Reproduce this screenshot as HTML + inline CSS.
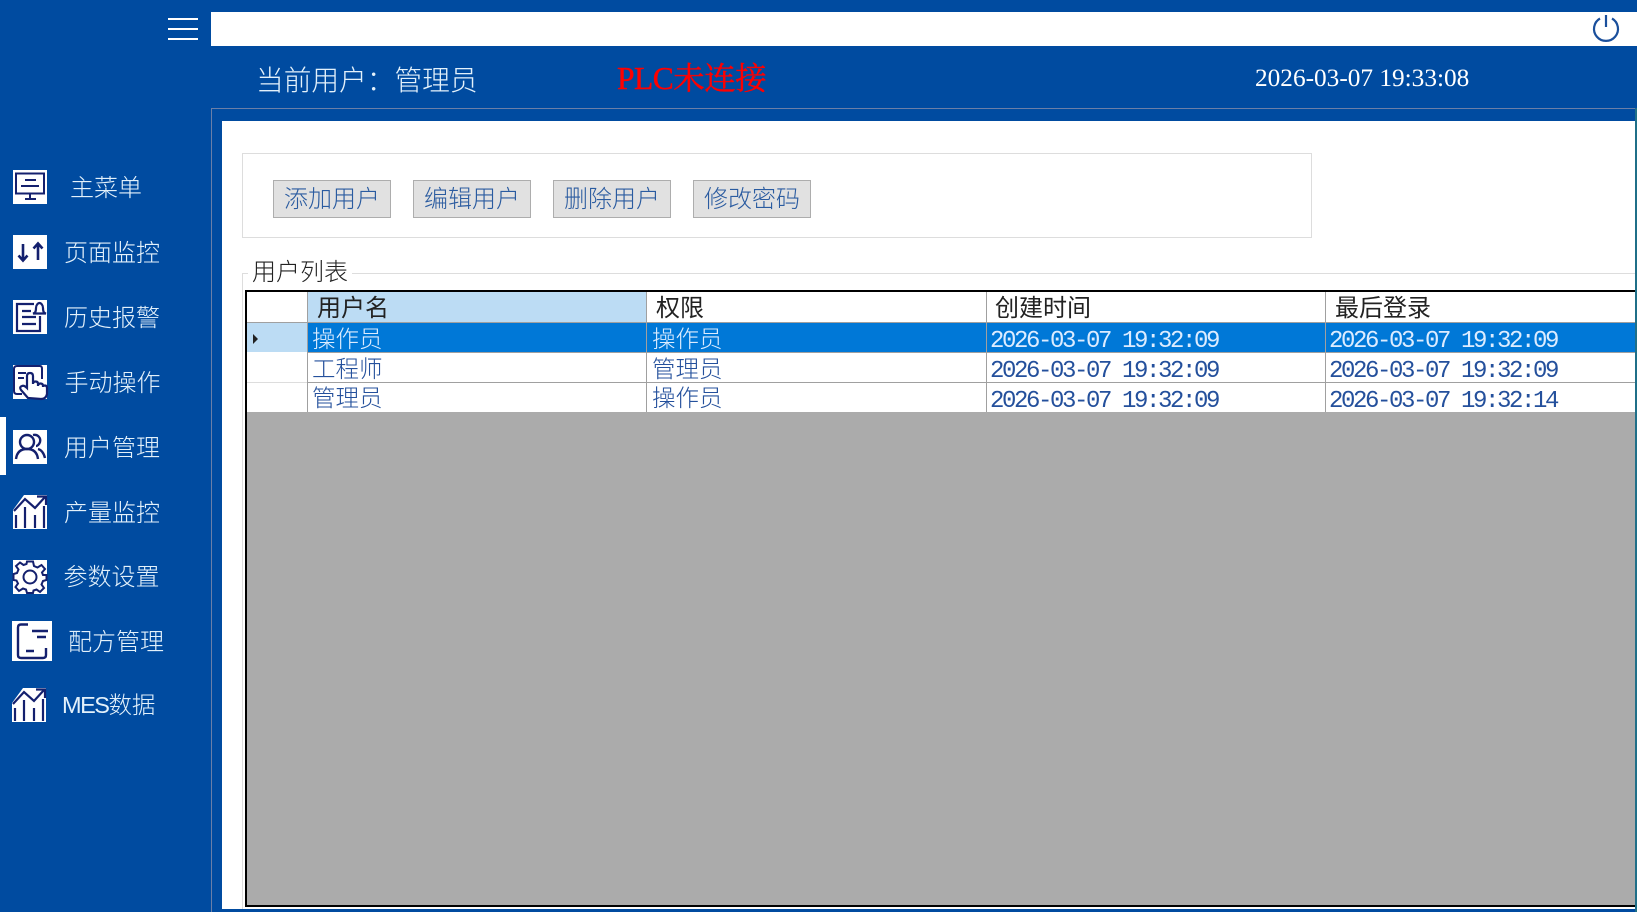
<!DOCTYPE html>
<html lang="zh"><head><meta charset="utf-8"><style>
html,body{margin:0;padding:0}
body{width:1637px;height:912px;background:#004ba0;overflow:hidden;position:relative;font-family:"Liberation Sans","Noto Sans CJK SC",sans-serif}
div,span,svg{position:absolute;display:block}
.t{white-space:nowrap;line-height:1}
.t span{position:static;display:inline}
.nav{color:#e3f1fb;font-size:24px;font-weight:300}
.ic{left:13px;width:34px;height:34px;background:#fff}
.ic *{position:static}
svg{overflow:visible}
svg *{position:static;display:inline}
svg path,svg rect,svg circle,svg polyline,svg line{fill:none;stroke:#14206e;stroke-width:2}
.btn{top:180px;width:116px;height:36px;background:#e1e1e1;border:1px solid #adadad;color:#2a5ba0;font-size:24px;line-height:38px;text-align:center;font-weight:300;letter-spacing:0}
.hd{top:297px;color:#222;font-size:24px}
.c{color:#24509c;font-size:23.5px;font-weight:300}
.d{color:#24509c;font-family:"Liberation Mono",monospace;font-size:24px;letter-spacing:-2.4px}
.w{color:#dcecff}
.ln{background:#a0a0a0}
</style></head><body>
<div style="left:211px;top:12px;width:1426px;height:34px;background:#fff"></div>
<div style="left:168px;top:18px;width:30px;height:2.4px;background:#fff"></div>
<div style="left:168px;top:28px;width:30px;height:2.4px;background:#fff"></div>
<div style="left:168px;top:38px;width:30px;height:2.4px;background:#fff"></div>
<svg style="left:1592px;top:13px" width="28" height="28" viewBox="0 0 28 28"><path d="M8 5.500A12 12 0 1 0 20 5.500M14 2V14" style="stroke:#1a4f9c;stroke-width:2.200"/></svg>
<div class="t" style="left:256px;top:67px;font-size:27.700px;color:#e3f1fb;font-weight:300">当前用户：管理员</div>
<div class="t" style="left:617px;top:63px;font-size:31.500px;color:#f00;font-family:'Liberation Serif','Noto Serif CJK SC',serif;letter-spacing:-.5px;-webkit-text-stroke:.4px #f00">PLC未连接</div>
<div class="t" style="left:1255px;top:66px;font-size:25.300px;color:#fff;font-family:'Liberation Serif',serif">2026-03-07 19:33:08</div>

<div style="left:211px;top:108px;width:1426px;height:1px;background:#6a7fa8"></div>
<div style="left:211px;top:108px;width:1px;height:804px;background:#6a7fa8"></div>
<div style="left:222px;top:121px;width:1413px;height:788px;background:#fff"></div>
<div style="left:1635px;top:108px;width:2px;height:804px;background:#1f6f88"></div>

<!-- sidebar -->
<div style="left:0;top:417px;width:6px;height:58px;background:#fff"></div>
<div class="ic" style="top:170px"><svg width="34" height="34" viewBox="0 0 34 34"><rect x="3" y="3.500" width="28" height="20"/><path d="M12 10H23M8 16H26M17 24V28M12 29H23"/></svg></div>
<div class="t nav" style="left:70px;top:176.500px">主菜单</div>
<div class="ic" style="top:235px"><svg width="34" height="34" viewBox="0 0 34 34"><path d="M10 9V25M5.500 20.500L10 25.500L14.500 20.500M25 25V9M20.500 13.500L25 8.500L29.500 13.500" style="stroke-width:2.600"/></svg></div>
<div class="t nav" style="left:64px;top:241.500px">页面监控</div>
<div class="ic" style="top:300px"><svg width="34" height="34" viewBox="0 0 34 34"><path d="M21 4H4V31H27V16M9 11H18M9 17H23M9 24H23" style="stroke-width:2.200"/><path d="M20 13.500C22 13 23 12 23 8C23 5 25 3 26.500 3C28 3 30 5 30 8C30 12 31 13 33 13.500Z" style="fill:#fff;stroke-width:2.200"/></svg></div>
<div class="t nav" style="left:64px;top:306.500px">历史报警</div>
<div class="ic" style="top:365px"><svg width="34" height="34" viewBox="0 0 34 34"><path d="M9 29H4Q1 29 1 26V4Q1 1 4 1H27Q29 1 29 4V14M5 8H13M5 13H11"/><path d="M15 33L8 25Q6 22 9 21Q11 20 14 23V11Q14 8 17 8Q20 8 20 11V19Q20 16.500 22.500 16.500Q25 16.500 25 19V21Q25 18.500 27.500 18.500Q30 18.500 30 21V22Q30 20.500 32 20.500Q34 20.500 34 23V29Q33 34 28 34Z" style="fill:#fff;stroke-width:2.200"/></svg></div>
<div class="t nav" style="left:64.500px;top:371.500px">手动操作</div>
<div class="ic" style="top:430px"><svg width="34" height="34" viewBox="0 0 34 34"><circle cx="14" cy="12" r="7" style="stroke-width:2.400"/><path d="M3 29C4 21 9 19 14 19C19 19 24 21 25 29M20 5C25 4 28 8 27 12C26 15 24 16 23 16M25 19C29 20 31 24 32 28" style="stroke-width:2.400"/></svg></div>
<div class="t nav" style="left:64px;top:436.500px">用户管理</div>
<div class="ic" style="top:495px"><svg width="34" height="34" viewBox="0 0 34 34"><path d="M0 0H11L0 15Z" style="fill:#004ba0;stroke:none"/><path d="M1 16L12 4L22 13L32 2M24 1.500H33V10M3 33V20M12 33V12M22 33V20M31 33V11" style="stroke-width:2.200"/></svg></div>
<div class="t nav" style="left:64px;top:501.500px">产量监控</div>
<div class="ic" style="top:560px"><svg width="34" height="34" viewBox="0 0 34 34"><circle cx="17" cy="17" r="6.500"/><path d="M14 1.500H20L21 6L24.500 7.500L28.500 5L32 9L29 12.500L30 15L33.500 15V20L30 21L28.500 24.500L31 28L27 32L23.500 29.500L20.500 30.500L20 33H14L13 29.500L10 28.500L6 31L2.500 27L5 23.500L3.500 20.500L.5 20V14L4 13L5.500 9.500L3 6L7 2.500L10.500 5L13.500 4Z"/></svg></div>
<div class="t nav" style="left:63.500px;top:566px">参数设置</div>
<div class="ic" style="left:12px;top:621px;width:40px;height:40px"><svg width="40" height="40" viewBox="0 0 40 40"><path d="M16 3.500H9Q6 3.500 6 6.500V34Q6 37 9 37H31Q34 37 34 34V27M20 10H36M25 16H34M14 30H22" style="stroke-width:2.400"/></svg></div>
<div class="t nav" style="left:68px;top:630.500px">配方管理</div>
<div class="ic" style="left:12px;top:688px"><svg width="34" height="34" viewBox="0 0 34 34"><path d="M0 0H11L0 15Z" style="fill:#004ba0;stroke:none"/><path d="M1 16L12 4L22 13L32 2M24 1.500H33V10M3 33V20M12 33V12M22 33V20M31 33V11" style="stroke-width:2.200"/></svg></div>
<div class="t nav" style="left:62px;top:693.500px;font-size:23.500px"><span style="letter-spacing:-1.500px">MES</span>数据</div>

<!-- toolbar -->
<div style="left:242px;top:153px;width:1068px;height:83px;border:1px solid #ddd"></div>
<div class="btn" style="left:273px">添加用户</div>
<div class="btn" style="left:413px">编辑用户</div>
<div class="btn" style="left:553px">删除用户</div>
<div class="btn" style="left:693px">修改密码</div>

<!-- group -->
<div style="left:242px;top:273px;width:1393px;height:1px;background:#ddd"></div>
<div style="left:242px;top:273px;width:1px;height:636px;background:#ddd"></div>
<div class="t" style="left:248px;top:261px;padding:0 4px;background:#fff;font-size:24px;color:#222;font-weight:300">用户列表</div>

<!-- grid -->
<div style="left:245px;top:290px;width:1390px;height:617px;background:#fff"></div>
<div style="left:245px;top:290px;width:1390px;height:2px;background:#000"></div>
<div style="left:245px;top:290px;width:2px;height:617px;background:#000"></div>
<div style="left:245px;top:905px;width:1390px;height:2px;background:#000"></div>
<div style="left:247px;top:412px;width:1388px;height:493px;background:#ababab"></div>
<div style="left:307px;top:292px;width:339px;height:30px;background:#bcdcf4"></div>
<div style="left:247px;top:322px;width:60px;height:30px;background:#bcdcf4"></div>
<div style="left:307px;top:323px;width:1328px;height:29px;background:#0078d7"></div>
<div class="ln" style="left:247px;top:322px;width:1388px;height:1px"></div>
<div class="ln" style="left:307px;top:352px;width:1328px;height:1px"></div>
<div style="left:247px;top:382px;width:60px;height:1px;background:#ddd"></div>
<div class="ln" style="left:307px;top:382px;width:1328px;height:1px"></div>
<div class="ln" style="left:307px;top:292px;width:1px;height:120px"></div>
<div class="ln" style="left:646px;top:292px;width:1px;height:120px"></div>
<div class="ln" style="left:986px;top:292px;width:1px;height:120px"></div>
<div class="ln" style="left:1325px;top:292px;width:1px;height:120px"></div>
<svg style="left:252px;top:334px" width="8" height="10" viewBox="0 0 8 10"><path d="M1 0L6 5L1 10Z" style="fill:#222;stroke:none"/></svg>

<div class="t hd" style="left:317px">用户名</div>
<div class="t hd" style="left:656px">权限</div>
<div class="t hd" style="left:995px">创建时间</div>
<div class="t hd" style="left:1335px">最后登录</div>

<div class="t c w" style="left:312px;top:328px">操作员</div>
<div class="t c w" style="left:652px;top:328px">操作员</div>
<div class="t d w" style="left:990px;top:329.500px">2026-03-07 19:32:09</div>
<div class="t d w" style="left:1329px;top:329.500px">2026-03-07 19:32:09</div>

<div class="t c" style="left:312px;top:358px">工程师</div>
<div class="t c" style="left:652px;top:358px">管理员</div>
<div class="t d" style="left:990px;top:359.500px">2026-03-07 19:32:09</div>
<div class="t d" style="left:1329px;top:359.500px">2026-03-07 19:32:09</div>

<div class="t c" style="left:312px;top:387px">管理员</div>
<div class="t c" style="left:652px;top:387px">操作员</div>
<div class="t d" style="left:990px;top:389.500px">2026-03-07 19:32:09</div>
<div class="t d" style="left:1329px;top:389.500px">2026-03-07 19:32:14</div>
</body></html>
